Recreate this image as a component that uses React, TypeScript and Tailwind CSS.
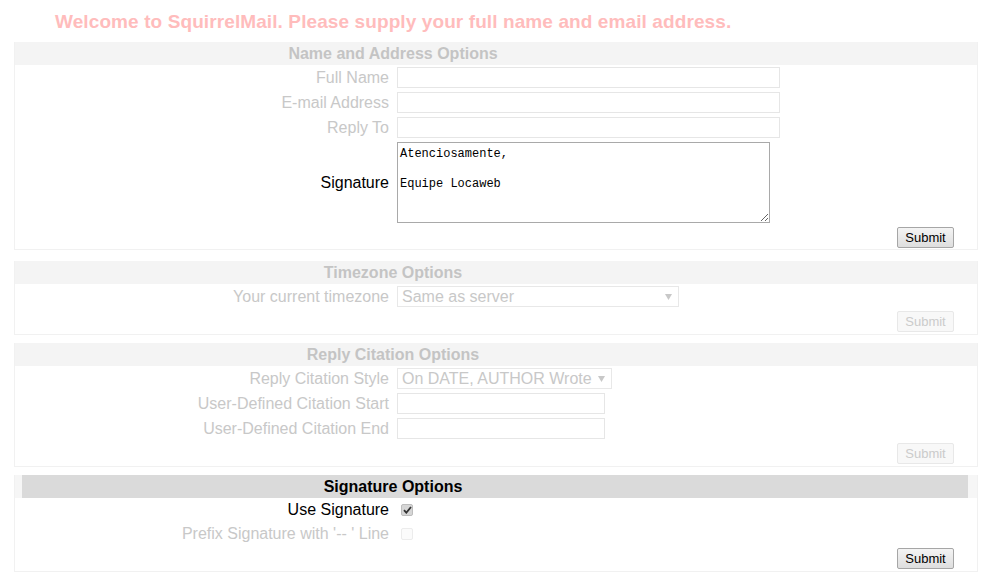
const font = "font-['Liberation_Sans',Arial,sans-serif]";

function Header({ title, dark }: { title: string; dark?: boolean }) {
  if (dark) {
    return (
      <div className="bg-[#f6f6f6] pl-[7px] pr-[9px]">
        <div className="bg-[#dadada] h-[23px] flex items-center">
          <div className="w-[742px] text-center font-bold text-[16px] leading-[20px] text-black">
            {title}
          </div>
        </div>
      </div>
    );
  }
  return (
    <div className="bg-[#f4f4f4] h-[23px] flex items-center">
      <div className="w-[756px] text-center font-bold text-[16px] leading-[20px] text-[#c4c4c4]">
        {title}
      </div>
    </div>
  );
}

function Row({
  label,
  children,
  dark,
  h = "h-[21px]",
}: {
  label: string;
  children?: React.ReactNode;
  dark?: boolean;
  h?: string;
}) {
  return (
    <div className={`flex items-center ${h}`}>
      <div
        className={`w-[382px] pr-[8px] text-right text-[16px] leading-[20px] whitespace-nowrap ${
          dark ? "text-black" : "text-[#c8c8c8]"
        }`}
      >
        {label}
      </div>
      <div className="flex items-center">{children}</div>
    </div>
  );
}

function TextInput({ w }: { w: string }) {
  return (
    <input
      type="text"
      className={`${w} h-[21px] border border-[#e6e6e6] bg-white outline-none`}
    />
  );
}

function FakeSelect({ w, text }: { w: string; text: string }) {
  return (
    <div
      className={`${w} h-[21px] border border-[#e8e8e8] bg-white flex items-center justify-between pl-[4px] pr-[6px] text-[16px] text-[#c8c8c8] leading-[19px]`}
    >
      <span className="whitespace-nowrap">{text}</span>
      <svg width="7" height="6" viewBox="0 0 7 6" className="shrink-0">
        <path d="M0 0h7L3.5 6z" fill="#c8c8c8" />
      </svg>
    </div>
  );
}

function SubmitButton({ disabled }: { disabled?: boolean }) {
  return (
    <div className="flex justify-end pr-[23px]">
      <button
        type="button"
        className={
          disabled
            ? "w-[57px] h-[21px] border border-[#e8e8e8] bg-[#f8f8f8] text-[13px] leading-[15px] text-[#cbcbcb] rounded-[2px]"
            : "w-[57px] h-[21px] border border-[#a6a6a6] bg-gradient-to-b from-[#f4f4f4] to-[#dedede] text-[13px] leading-[15px] text-black rounded-[2px]"
        }
      >
        Submit
      </button>
    </div>
  );
}

function Box({
  checked,
  disabled,
}: {
  checked?: boolean;
  disabled?: boolean;
}) {
  return (
    <span
      className={`ml-[4px] w-[12px] h-[12px] rounded-[2px] flex items-center justify-center border ${
        disabled ? "border-[#ececec] bg-[#fbfbfb]" : "border-[#bdbdbd] bg-[#d6d6d6]"
      }`}
    >
      {checked && (
        <svg width="9" height="8" viewBox="0 0 9 8">
          <path d="M1 4.2l2.3 2.5L8 1" stroke="#333" strokeWidth="1.8" fill="none" />
        </svg>
      )}
    </span>
  );
}

export default function App() {
  return (
    <div className={`${font} bg-white w-[985px] h-[579px] overflow-hidden`}>
      <div className="h-[42px] pt-[11px] pl-[55px] text-[19px] leading-[21px] tracking-[0.1px] font-bold text-[#ffbcbc] whitespace-nowrap">
        Welcome to SquirrelMail. Please supply your full name and email address.
      </div>

      {/* Name and Address */}
      <div className="ml-[14px] w-[964px] border-x border-b border-[#f1f1f1]">
        <Header title="Name and Address Options" />
        <div className="flex flex-col gap-[4px] pt-[2px] pb-[1px]">
          <Row label="Full Name">
            <TextInput w="w-[383px]" />
          </Row>
          <Row label="E-mail Address">
            <TextInput w="w-[383px]" />
          </Row>
          <Row label="Reply To">
            <TextInput w="w-[383px]" />
          </Row>
          <Row label="Signature" dark h="h-[81px]">
            <textarea
              className="w-[373px] h-[81px] border border-[#a9a9a9] px-[2px] pt-[4px] pb-[2px] text-[12px] leading-[15px] text-black font-['Liberation_Mono',monospace] outline-none"
              defaultValue={"Atenciosamente,\n\nEquipe Locaweb"}
            />
          </Row>
          <SubmitButton />
        </div>
      </div>

      {/* Timezone */}
      <div className="mt-[11px] ml-[14px] w-[964px] border-x border-b border-[#f1f1f1]">
        <Header title="Timezone Options" />
        <div className="flex flex-col gap-[4px] pt-[2px] pb-[2px]">
          <Row label="Your current timezone">
            <FakeSelect w="w-[282px]" text="Same as server" />
          </Row>
          <SubmitButton disabled />
        </div>
      </div>

      {/* Reply Citation */}
      <div className="mt-[8px] ml-[14px] w-[964px] border-x border-b border-[#f1f1f1]">
        <Header title="Reply Citation Options" />
        <div className="flex flex-col gap-[4px] pt-[2px] pb-[2px]">
          <Row label="Reply Citation Style">
            <FakeSelect w="w-[215px]" text="On DATE, AUTHOR Wrote" />
          </Row>
          <Row label="User-Defined Citation Start">
            <TextInput w="w-[208px]" />
          </Row>
          <Row label="User-Defined Citation End">
            <TextInput w="w-[208px]" />
          </Row>
          <SubmitButton disabled />
        </div>
      </div>

      {/* Signature */}
      <div className="mt-[8px] ml-[14px] w-[964px] border-x border-b border-[#f1f1f1]">
        <Header title="Signature Options" dark />
        <div className="flex flex-col gap-[4px] pt-[2px] pb-[2px]">
          <Row label="Use Signature" dark h="h-[20px]">
            <Box checked />
          </Row>
          <Row label="Prefix Signature with '-- ' Line" h="h-[20px]">
            <Box disabled />
          </Row>
          <SubmitButton />
        </div>
      </div>
    </div>
  );
}
